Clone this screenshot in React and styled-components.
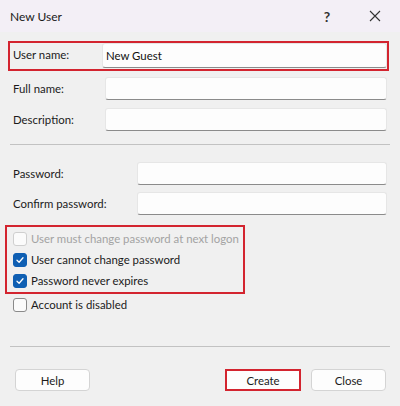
import React from "react"
import styled, { createGlobalStyle } from "styled-components"

const GlobalStyle = createGlobalStyle`
  html, body {
    margin: 0;
    padding: 0;
    background: #f0f0f0;
  }
  * { box-sizing: border-box; }
`

const Dialog = styled.div`
  width: 400px;
  height: 406px;
  background: #f0f0f0;
  font-family: Lato, "Noto Sans", sans-serif;
  font-size: 11.4px;
  color: #1b1b1b;
  display: flex;
  flex-direction: column;
  overflow: hidden;
  white-space: nowrap;
`

const TitleBar = styled.div`
  height: 32px;
  background: #f3eff6;
  display: flex;
  align-items: center;
  padding-left: 10px;
  padding-right: 2px;
  font-size: 12px;
  color: #1a1a1a;
`

const Title = styled.div`
  flex: 1;
`

const TitleButton = styled.div`
  width: ${({width}) => width || 46}px;
  height: 32px;
  display: flex;
  align-items: center;
  justify-content: center;
  font-size: 14px;
  font-weight: 700;
  color: #333;
`

const Body = styled.div`
  padding: 0 13px 0 13px;
  display: flex;
  flex-direction: column;
`

const Row = styled.div`
  display: grid;
  grid-template-columns: ${({labelWidth}) => labelWidth}px 1fr;
  align-items: center;
  height: ${({height}) => height || 23}px;
  margin-top: ${({top}) => top}px;
`

const UserNameFrame = styled(Row)`
  border: 2px solid #d3242f;
  margin-left: -5px;
  margin-right: -2px;
  padding-left: 3px;
  align-items: start;
`

const Label = styled.label`
  color: #1b1b1b;
`

const Input = styled.div`
  height: ${({height}) => height || 23}px;
  background: #fdfdfd;
  border: 1px solid #e6e6e6;
  border-bottom: 1px solid #8b8b8b;
  border-radius: 3px;
  padding-left: 3px;
  display: flex;
  align-items: center;
  color: #111;
`

const Separator = styled.div`
  height: 1px;
  background: #c2c2c2;
  margin: ${({top}) => top}px -3px 0 -3px;
`

const CheckFrame = styled.div`
  border: 2px solid #d3242f;
  margin: ${({top}) => top}px 0 0 -8px;
  width: 240px;
  padding: 1px 0 1px 6px;
  display: flex;
  flex-direction: column;
`

const CheckRow = styled.div`
  height: 21px;
  display: flex;
  align-items: center;
  gap: 4px;
  color: ${({disabled}) => disabled ? "#a3a3a3" : "#1b1b1b"};
`

const Box = styled.span`
  width: 14px;
  height: 14px;
  border-radius: 3px;
  flex: none;
  display: flex;
  align-items: center;
  justify-content: center;
  background: ${({checked}) => checked ? "#0f5fb3" : "#fbfbfb"};
  border: 1px solid ${({checked, disabled}) => checked ? "#0f5fb3" : disabled ? "#cfcfcf" : "#8a8a8a"};
`

const ButtonBar = styled.div`
  display: flex;
  align-items: center;
  margin-top: 22px;
  padding-left: 2px;
`

const Button = styled.div`
  width: ${({width}) => width || 75}px;
  height: 22px;
  background: #fdfdfd;
  border: ${({highlight}) => highlight ? "2px solid #d3242f" : "1px solid #d4d4d4"};
  border-radius: ${({highlight}) => highlight ? 0 : 4}px;
  display: flex;
  align-items: center;
  justify-content: center;
  margin-left: ${({left}) => left || 0}px;
  color: #1b1b1b;
`

const Check = ({checked, disabled, children}) => (
  <CheckRow disabled={disabled}>
    <Box checked={checked} disabled={disabled}>
      {checked && (
        <svg width="10" height="10" viewBox="0 0 10 10">
          <path d="M2 5.2 L4.1 7.2 L8 2.8" fill="none" stroke="#fff" strokeWidth="1.3" strokeLinecap="round" strokeLinejoin="round" />
        </svg>
      )}
    </Box>
    {children}
  </CheckRow>
)

export default function App() {
  return (
    <Dialog>
      <GlobalStyle />
      <TitleBar>
        <Title>New User</Title>
        <TitleButton width={50}>?</TitleButton>
        <TitleButton>
          <svg width="12" height="12" viewBox="0 0 12 12">
            <path d="M1 1 L11 11 M11 1 L1 11" stroke="#333" strokeWidth="1.1" />
          </svg>
        </TitleButton>
      </TitleBar>
      <Body>
        <UserNameFrame labelWidth={89} top={9} height={30}>
          <Label style={{ marginTop: 5 }}>User name:</Label>
          <Input height={25}>New Guest</Input>
        </UserNameFrame>
        <Row labelWidth={92} top={6}>
          <Label>Full name:</Label>
          <Input />
        </Row>
        <Row labelWidth={92} top={8}>
          <Label>Description:</Label>
          <Input />
        </Row>
        <Separator top={13} />
        <Row labelWidth={124} top={17}>
          <Label>Password:</Label>
          <Input />
        </Row>
        <Row labelWidth={124} top={7}>
          <Label>Confirm password:</Label>
          <Input />
        </Row>
        <CheckFrame top={10}>
          <Check disabled>User must change password at next logon</Check>
          <Check checked>User cannot change password</Check>
          <Check checked>Password never expires</Check>
        </CheckFrame>
        <Check>Account is disabled</Check>
        <Separator top={31} />
        <ButtonBar>
          <Button>Help</Button>
          <Button highlight width={76} left={135}>Create</Button>
          <Button left={10}>Close</Button>
        </ButtonBar>
      </Body>
    </Dialog>
  )
}
